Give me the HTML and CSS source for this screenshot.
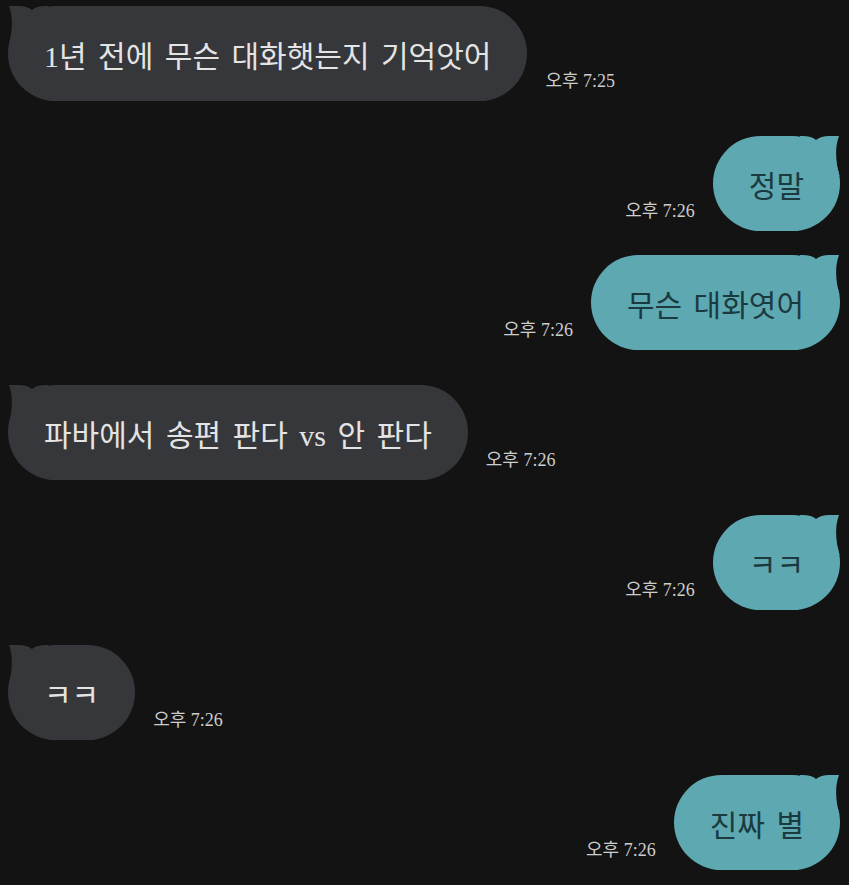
FILE: index.html
```html
<!DOCTYPE html>
<html>
<head>
    <meta charset='utf-8'>
    <title>chat</title>
    <meta name='viewport' content='width=device-width, initial-scale=1'>
    <link rel="stylesheet" href="styles.css">
</head>
<body>
    <div class="chat">
        <div class="row in">
            <div class="bubble">1년 전에 무슨 대화햇는지 기억앗어</div>
            <span class="time">오후 7:25</span>
        </div>
        <div class="row out">
            <span class="time">오후 7:26</span>
            <div class="bubble">정말</div>
        </div>
        <div class="row out same">
            <span class="time">오후 7:26</span>
            <div class="bubble">무슨 대화엿어</div>
        </div>
        <div class="row in">
            <div class="bubble">파바에서 송편 판다 vs 안 판다</div>
            <span class="time">오후 7:26</span>
        </div>
        <div class="row out">
            <span class="time">오후 7:26</span>
            <div class="bubble">ㅋㅋ</div>
        </div>
        <div class="row in">
            <div class="bubble">ㅋㅋ</div>
            <span class="time">오후 7:26</span>
        </div>
        <div class="row out">
            <span class="time">오후 7:26</span>
            <div class="bubble">진짜 별</div>
        </div>
    </div>
</body>
</html>
```

FILE: styles.css
```css
body {
    margin: 0;
    background-color: #131313;
    font-family: "Liberation Serif", "Noto Sans CJK KR", serif;
    color: #e4e4e4;
}
.chat {
    padding: 6px 9px 0 8px;
}
.row {
    display: flex;
    align-items: flex-end;
    gap: 18px;
    margin-top: 35px;
}
.row:first-child {
    margin-top: 0;
}
.row.same {
    margin-top: 24px;
}
.row.out {
    justify-content: flex-end;
}
.bubble {
    position: relative;
    z-index: 0;
    height: 95px;
    display: flex;
    align-items: center;
    padding: 0 36px;
    border-radius: 48px;
    font-size: 30px;
    word-spacing: 4px;
    white-space: nowrap;
    background-color: #36373a;
}
.bubble::before {
    content: "";
    position: absolute;
    z-index: -1;
    top: 0;
    left: 0;
    width: 40px;
    height: 40px;
    background-color: inherit;
    clip-path: path('M1 0 L11 0 Q19 0 24 4 Q28 0 38 0 L40 0 L40 40 L0.5 40 Q7 16 1 0 Z');
}
.out .bubble {
    background-color: #5ea9b1;
    color: #1b3a40;
}
.out .bubble::before {
    left: auto;
    right: 0;
    transform: scaleX(-1);
}
.time {
    font-size: 18px;
    line-height: 20px;
    padding-bottom: 10px;
    color: #cdcdcd;
    white-space: nowrap;
}
```
